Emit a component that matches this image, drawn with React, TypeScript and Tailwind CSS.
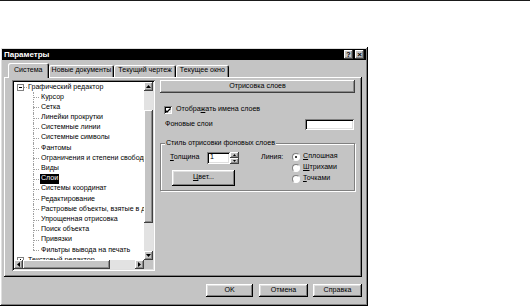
const RAISED =
  "shadow-[inset_-1px_-1px_0_#000,inset_1px_1px_0_#fff,inset_-2px_-2px_0_#808080,inset_2px_2px_0_#dfdfdf]";
const RAISED_THIN = "shadow-[inset_-1px_-1px_0_#404040,inset_1px_1px_0_#fff,inset_-2px_-2px_0_#8a8a8a]";
const SUNKEN =
  "shadow-[inset_1px_1px_0_#808080,inset_-1px_-1px_0_#fff,inset_2px_2px_0_#000,inset_-2px_-2px_0_#dfdfdf]";

const CHILDREN = [
  "Курсор",
  "Сетка",
  "Линейки прокрутки",
  "Системные линии",
  "Системные символы",
  "Фантомы",
  "Ограничения и степени свободы",
  "Виды",
  "Слои",
  "Системы координат",
  "Редактирование",
  "Растровые объекты, взятые в документ",
  "Упрощенная отрисовка",
  "Поиск объекта",
  "Привязки",
  "Фильтры вывода на печать",
];

function Arrow({ dir }: { dir: "up" | "down" | "left" | "right" }) {
  const points = {
    up: "0,3 2.5,0 5,3",
    down: "0,0 2.5,3 5,0",
    left: "3,0 0,2.5 3,5",
    right: "0,0 3,2.5 0,5",
  }[dir];
  const vertical = dir === "up" || dir === "down";
  return (
    <svg width={vertical ? 5 : 3} height={vertical ? 3 : 5} viewBox={vertical ? "0 0 5 3" : "0 0 3 5"}>
      <polygon points={points} fill="#000" />
    </svg>
  );
}

function ScrollBtn({ dir }: { dir: "up" | "down" | "left" | "right" }) {
  return (
    <div className={`flex h-[9px] w-[9px] shrink-0 items-center justify-center bg-[#c4c4c4] ${RAISED_THIN}`}>
      <Arrow dir={dir} />
    </div>
  );
}

function ExpandBox({ open }: { open: boolean }) {
  return (
    <div className="relative ml-[3px] h-[7px] w-[7px] shrink-0 border border-[#808080] bg-white">
      <div className="absolute left-[1px] top-[2px] h-px w-[3px] bg-black" />
      {!open && <div className="absolute left-[2px] top-[1px] h-[3px] w-px bg-black" />}
    </div>
  );
}

function Tree() {
  return (
    <div className={`flex h-[191px] w-[143px] shrink-0 flex-col bg-white p-[2px] ${SUNKEN}`}>
      <div className="flex h-[178px]">
        <div className="relative h-full w-[130px] overflow-hidden whitespace-nowrap">
          <div className="flex h-[10.2px] items-center">
            <ExpandBox open />
            <div className="w-[3px] border-t border-dotted border-[#a0a0a0]" />
            <span className="ml-[1px]">Графический редактор</span>
          </div>
          {CHILDREN.map((label, i) => (
            <div key={label} className="flex h-[10.2px] items-center">
              <div className="relative ml-[19px] h-full w-[6px] shrink-0">
                <div
                  className={
                    i === CHILDREN.length - 1
                      ? "absolute left-0 top-0 h-1/2 border-l border-dotted border-[#a0a0a0]"
                      : "absolute left-0 top-0 h-full border-l border-dotted border-[#a0a0a0]"
                  }
                />
                <div className="absolute left-0 top-1/2 w-full border-t border-dotted border-[#a0a0a0]" />
              </div>
              {label === "Слои" ? (
                <span className="ml-[1px] flex h-[10px] items-center bg-black px-[1px] text-white">{label}</span>
              ) : (
                <span className="ml-[2px]">{label}</span>
              )}
            </div>
          ))}
          <div className="flex h-[10.2px] items-center">
            <ExpandBox open={false} />
            <div className="w-[3px] border-t border-dotted border-[#a0a0a0]" />
            <span className="ml-[1px]">Текстовый редактор</span>
          </div>
        </div>
        <div className="flex w-[9px] flex-col bg-[#e2e2e2]">
          <ScrollBtn dir="up" />
          <div className={`mt-[19px] h-[113px] bg-[#c4c4c4] ${RAISED_THIN}`} />
          <div className="flex-1" />
          <ScrollBtn dir="down" />
        </div>
      </div>
      <div className="flex h-[9px]">
        <div className="flex w-[130px] bg-[#e2e2e2]">
          <ScrollBtn dir="left" />
          <div className={`h-full w-[87px] bg-[#c4c4c4] ${RAISED_THIN}`} />
          <div className="flex-1" />
          <ScrollBtn dir="right" />
        </div>
        <div className="w-[9px] bg-[#c4c4c4]" />
      </div>
    </div>
  );
}

function Radio({ checked, label, u, rest }: { checked?: boolean; label: string; u: string; rest: string }) {
  return (
    <div className="flex h-[11px] items-center" aria-label={label}>
      <div className="flex h-[8px] w-[8px] items-center justify-center rounded-full border border-[#808080] border-b-white border-r-white bg-white">
        {checked && <div className="h-[2px] w-[2px] rounded-full bg-black" />}
      </div>
      <span className="ml-[3px]">
        <span className="underline">{u}</span>
        {rest}
      </span>
    </div>
  );
}

function RightPane() {
  return (
    <div className="ml-[5px] flex w-[195px] flex-col">
      <div className={`flex h-[13px] items-center justify-center bg-[#c4c4c4] ${RAISED_THIN}`}>Отрисовка слоев</div>

      <div className="mt-[13px] flex h-[8px] items-center pl-[4px]">
        <div className={`flex h-[8px] w-[8px] items-center justify-center bg-white ${SUNKEN}`}>
          <svg width="6" height="5" viewBox="0 0 6 5">
            <polyline points="0.5,2.5 2,4 5.5,0.5" fill="none" stroke="#000" strokeWidth="1.3" />
          </svg>
        </div>
        <span className="ml-[4px]">
          Отобра<span className="underline">ж</span>ать имена слоев
        </span>
      </div>

      <div className="mt-[5px] flex h-[11px] items-center pl-[5px]">
        <span>Фоновые слои</span>
        <div className={`ml-auto mr-[1px] h-[11px] w-[49px] bg-white ${SUNKEN}`} />
      </div>

      <div className="relative mt-[13px] h-[48px] border border-[#808080] shadow-[1px_1px_0_#fff,inset_1px_1px_0_#fff]">
        <span className="absolute left-[4px] top-[-4px] bg-[#c4c4c4] px-[1px]">Стиль отрисовки фоновых слоев</span>
        <div className="flex pl-[9px] pt-[8px]">
          <div className="flex flex-col">
            <div className="flex h-[12px] items-center">
              <span className="w-[37px]">
                <span className="underline">Т</span>олщина
              </span>
              <div className={`flex h-[12px] w-[23px] items-center bg-white pl-[3px] ${SUNKEN}`}>1</div>
              <div className="flex w-[9px] flex-col">
                <div className={`flex h-[6px] items-center justify-center bg-[#c4c4c4] ${RAISED_THIN}`}>
                  <svg width="3" height="2" viewBox="0 0 3 2">
                    <polygon points="0,2 1.5,0 3,2" fill="#000" />
                  </svg>
                </div>
                <div className={`flex h-[6px] items-center justify-center bg-[#c4c4c4] ${RAISED_THIN}`}>
                  <svg width="3" height="2" viewBox="0 0 3 2">
                    <polygon points="0,0 1.5,2 3,0" fill="#000" />
                  </svg>
                </div>
              </div>
            </div>
            <div className={`ml-[2px] mt-[6px] flex h-[16px] w-[63px] items-center justify-center bg-[#c4c4c4] ${RAISED}`}>
              <span>
                <span className="underline">Ц</span>вет...
              </span>
            </div>
          </div>
          <div className="ml-[22px] flex h-[12px] w-[31px] items-center">Линия:</div>
          <div className="-mt-[0.5px] flex flex-col">
            <Radio checked label="Сплошная" u="С" rest="плошная" />
            <Radio label="Штрихами" u="Ш" rest="трихами" />
            <Radio label="Точками" u="Т" rest="очками" />
          </div>
        </div>
      </div>
    </div>
  );
}

function DialogButton({ label, width }: { label: string; width: string }) {
  return (
    <div className={`flex h-[13px] items-center justify-center bg-[#c4c4c4] ${width} ${RAISED}`}>{label}</div>
  );
}

export default function App() {
  return (
    <div className="h-[307px] w-[530px] overflow-hidden bg-white font-['Liberation_Sans',Arial,sans-serif] text-[7.1px] leading-none text-black">
      <div className="h-px w-full bg-[#1a1a1a]" />

      <div className={`mt-[46px] flex h-[259px] w-[368px] flex-col bg-[#c4c4c4] p-[2px] ${RAISED}`}>
        <div className="flex h-[11px] items-center justify-between bg-black pl-[2px] pr-[2px]">
          <span className="text-[8px] font-bold text-white">Параметры</span>
          <div className="flex gap-[2px]">
            <div className={`flex h-[9px] w-[9px] items-center justify-center bg-[#c4c4c4] text-[7px] font-bold ${RAISED_THIN}`}>
              ?
            </div>
            <div className={`flex h-[9px] w-[9px] items-center justify-center bg-[#c4c4c4] text-[8px] font-bold ${RAISED_THIN}`}>
              ×
            </div>
          </div>
        </div>

        <div className="relative z-10 mt-[4px] flex h-[13px] items-end pl-[6px]">
          <div className="-mb-px flex h-[15px] items-center rounded-t-[2px] bg-[#c4c4c4] px-[6px] pt-[1px] shadow-[inset_1px_1px_0_#fff,inset_-1px_0_0_#000,inset_-2px_0_0_#808080]">
            Система
          </div>
          <div className="flex h-[12px] items-center rounded-t-[2px] px-[3px] shadow-[inset_1px_1px_0_#fff,inset_-1px_0_0_#000,inset_-2px_0_0_#808080]">
            Новые документы
          </div>
          <div className="flex h-[12px] items-center rounded-t-[2px] px-[4px] shadow-[inset_1px_1px_0_#fff,inset_-1px_0_0_#000,inset_-2px_0_0_#808080]">
            Текущий чертеж
          </div>
          <div className="flex h-[12px] items-center rounded-t-[2px] px-[4px] shadow-[inset_1px_1px_0_#fff,inset_-1px_0_0_#000,inset_-2px_0_0_#808080]">
            Текущее окно
          </div>
        </div>

        <div className="ml-[2px] flex h-[200px] w-[358px] pl-[8px] pt-[3px] shadow-[inset_-1px_-1px_0_#000,inset_1px_1px_0_#fff,inset_-2px_-2px_0_#808080]">
          <Tree />
          <RightPane />
        </div>

        <div className="mt-[7px] flex justify-end pr-[4px]">
          <DialogButton label="OK" width="w-[47px]" />
          <div className="w-[6px]" />
          <DialogButton label="Отмена" width="w-[49px]" />
          <div className="w-[5px]" />
          <DialogButton label="Справка" width="w-[49px]" />
        </div>
      </div>
    </div>
  );
}
